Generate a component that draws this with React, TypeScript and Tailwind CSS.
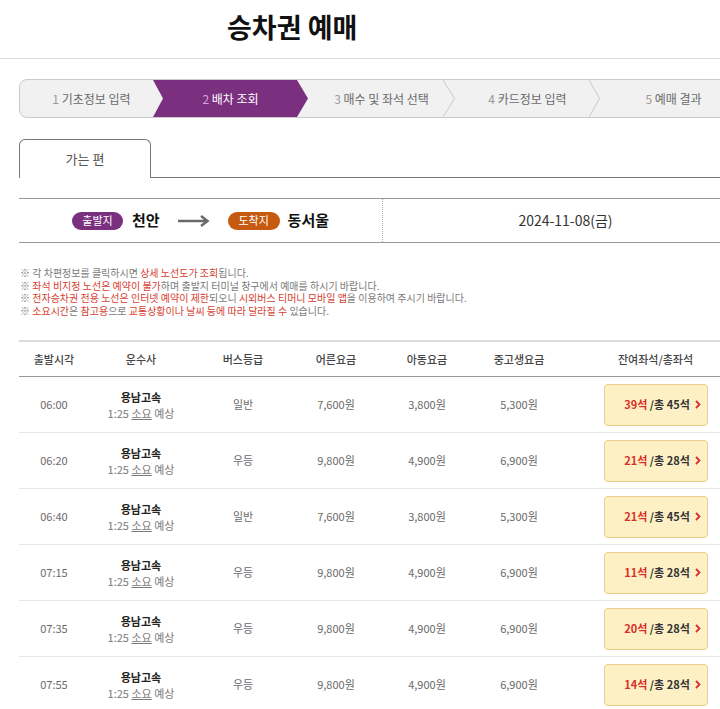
import React from "react";

const rows = [
  { time: "06:00", grade: "일반", adult: "7,600원", child: "3,800원", teen: "5,300원", left: 39, total: 45 },
  { time: "06:20", grade: "우등", adult: "9,800원", child: "4,900원", teen: "6,900원", left: 21, total: 28 },
  { time: "06:40", grade: "일반", adult: "7,600원", child: "3,800원", teen: "5,300원", left: 21, total: 45 },
  { time: "07:15", grade: "우등", adult: "9,800원", child: "4,900원", teen: "6,900원", left: 11, total: 28 },
  { time: "07:35", grade: "우등", adult: "9,800원", child: "4,900원", teen: "6,900원", left: 20, total: 28 },
  { time: "07:55", grade: "우등", adult: "9,800원", child: "4,900원", teen: "6,900원", left: 14, total: 28 },
];

function Chevron({ w }: { w: number }) {
  return (
    <svg className="absolute right-0 top-0 h-full" width={w} viewBox={`0 0 ${w} 37`} preserveAspectRatio="none">
      <polyline points={`0,0 ${w - 0.5},18.5 0,37`} fill="none" stroke="#c9c9c9" strokeWidth="1" />
    </svg>
  );
}

const R = "text-[#d6402f]";

export default function App() {
  return (
    <div className="w-[720px] h-[709px] overflow-hidden bg-white font-['Noto_Sans_CJK_KR','Noto_Sans',sans-serif]">
      {/* header */}
      <div className="h-[59px] border-b border-[#dddddd] flex items-center pl-[227px] pb-[5px]">
        <h1 className="text-[27px] font-bold text-[#111] leading-none">승차권 예매</h1>
      </div>

      <div className="w-[729px] ml-[19px]">
        {/* steps */}
        <div className="mt-[20px] h-[39px] flex border border-[#c9c9c9] rounded-l-[8px] bg-[#f1f1f1] overflow-hidden text-[12px] text-[#6a6a6a]">
          <div className="w-[133px] flex items-center justify-center pl-[10px]">
            <span><span className="text-[#9a9a9a]">1</span> 기초정보 입력</span>
          </div>
          <div className="w-[155px] flex items-center justify-center bg-[#7a2f7f] text-white [clip-path:polygon(0_0,144px_0,100%_50%,144px_100%,0_100%,10px_50%)]">
            <span><span className="text-[#d7a4dc]">2</span> 배차 조회</span>
          </div>
          <div className="relative w-[147px] flex items-center justify-center">
            <span><span className="text-[#9a9a9a]">3</span> 매수 및 좌석 선택</span>
            <Chevron w={12} />
          </div>
          <div className="relative w-[145px] flex items-center justify-center">
            <span><span className="text-[#9a9a9a]">4</span> 카드정보 입력</span>
            <Chevron w={11} />
          </div>
          <div className="flex-1 flex items-center justify-center">
            <span><span className="text-[#9a9a9a]">5</span> 예매 결과</span>
          </div>
        </div>

        {/* tab */}
        <div className="mt-[21px] flex items-end border-b border-[#777]">
          <div className="w-[132px] h-[39px] -mb-px bg-white border border-b-0 border-[#777] rounded-t-[6px] flex items-center justify-center text-[13px] text-[#555]">
            가는 편
          </div>
        </div>

        {/* route */}
        <div className="mt-[20px] h-[45px] flex border-t border-b border-[#999]">
          <div className="w-[363px] flex items-center justify-center">
            <span className="h-[18px] w-[51px] rounded-full bg-[#7a2f7f] text-white text-[11px] flex items-center justify-center">출발지</span>
            <span className="ml-[9px] text-[15px] font-bold text-[#111]">천안</span>
            <svg className="ml-[18px]" width="32" height="12" viewBox="0 0 32 12">
              <line x1="0" y1="6" x2="29" y2="6" stroke="#6a6a6a" strokeWidth="2.5" />
              <polyline points="23,1 29.5,6 23,11" fill="none" stroke="#6a6a6a" strokeWidth="2.5" />
            </svg>
            <span className="ml-[18px] h-[18px] w-[52px] rounded-full bg-[#c65a11] text-white text-[11px] flex items-center justify-center">도착지</span>
            <span className="ml-[8px] text-[15px] font-bold text-[#111]">동서울</span>
          </div>
          <div className="flex-1 border-l border-dotted border-[#aaa] flex items-center justify-center text-[14px] text-[#333]">
            2024-11-08(금)
          </div>
        </div>

        {/* notes */}
        <div className="mt-[24px] text-[10px] leading-[12.5px] text-[#7a7a7a] pl-px">
          <p>※ 각 차편정보를 클릭하시면 <span className={R}>상세 노선도가 조회</span>됩니다.</p>
          <p>※ <span className={R}>좌석 비지정 노선은 예약이 불가</span>하며 출발지 터미널 창구에서 예매를 하시기 바랍니다.</p>
          <p>※ <span className={R}>전자승차권 전용 노선은 인터넷 예약이 제한</span>되오니 <span className={R}>시외버스 티머니 모바일 앱</span>을 이용하여 주시기 바랍니다.</p>
          <p>※ <span className={R}>소요시간</span>은 <span className={R}>참고용</span>으로 <span className={R}>교통상황이나 날씨 등에 따라 달라질 수</span> 있습니다.</p>
        </div>

        {/* table */}
        <div className="mt-[23px]">
          <div className="grid grid-cols-[70px_104px_100px_86px_96px_88px_185px] h-[37px] border-t-2 border-[#dcdcdc] border-b border-b-[#999] items-center text-center text-[11px] text-[#444] font-medium">
            <div>출발시각</div>
            <div>운수사</div>
            <div>버스등급</div>
            <div>어른요금</div>
            <div>아동요금</div>
            <div>중고생요금</div>
            <div>잔여좌석/총좌석</div>
          </div>
          {rows.map((r, i) => (
            <div
              key={i}
              className="grid grid-cols-[70px_104px_100px_86px_96px_88px_185px] h-[56px] border-b border-[#e6e6e6] items-center text-center text-[11px] text-[#6a6a6a]"
            >
              <div>{r.time}</div>
              <div className="flex flex-col items-center leading-[16px]">
                <span className="font-bold text-[#222]">용남고속</span>
                <span className="text-[#777]">1:25 <span className="underline">소요</span> 예상</span>
              </div>
              <div>{r.grade}</div>
              <div>{r.adult}</div>
              <div>{r.child}</div>
              <div>{r.teen}</div>
              <div className="flex justify-center">
                <div className="w-[104px] h-[42px] rounded-[4px] bg-[#fdf0c4] border border-[#eccd8c] flex items-center justify-center pl-[14px] gap-[5px] text-[11px] font-bold">
                  <span>
                    <span className="text-[#d8302a]">{r.left}석</span>
                    <span className="text-[#333]"> /총 {r.total}석</span>
                  </span>
                  <svg width="6" height="9" viewBox="0 0 6 9">
                    <polyline points="1,1 4.5,4.5 1,8" fill="none" stroke="#d8302a" strokeWidth="1.8" />
                  </svg>
                </div>
              </div>
            </div>
          ))}
        </div>
      </div>
    </div>
  );
}
